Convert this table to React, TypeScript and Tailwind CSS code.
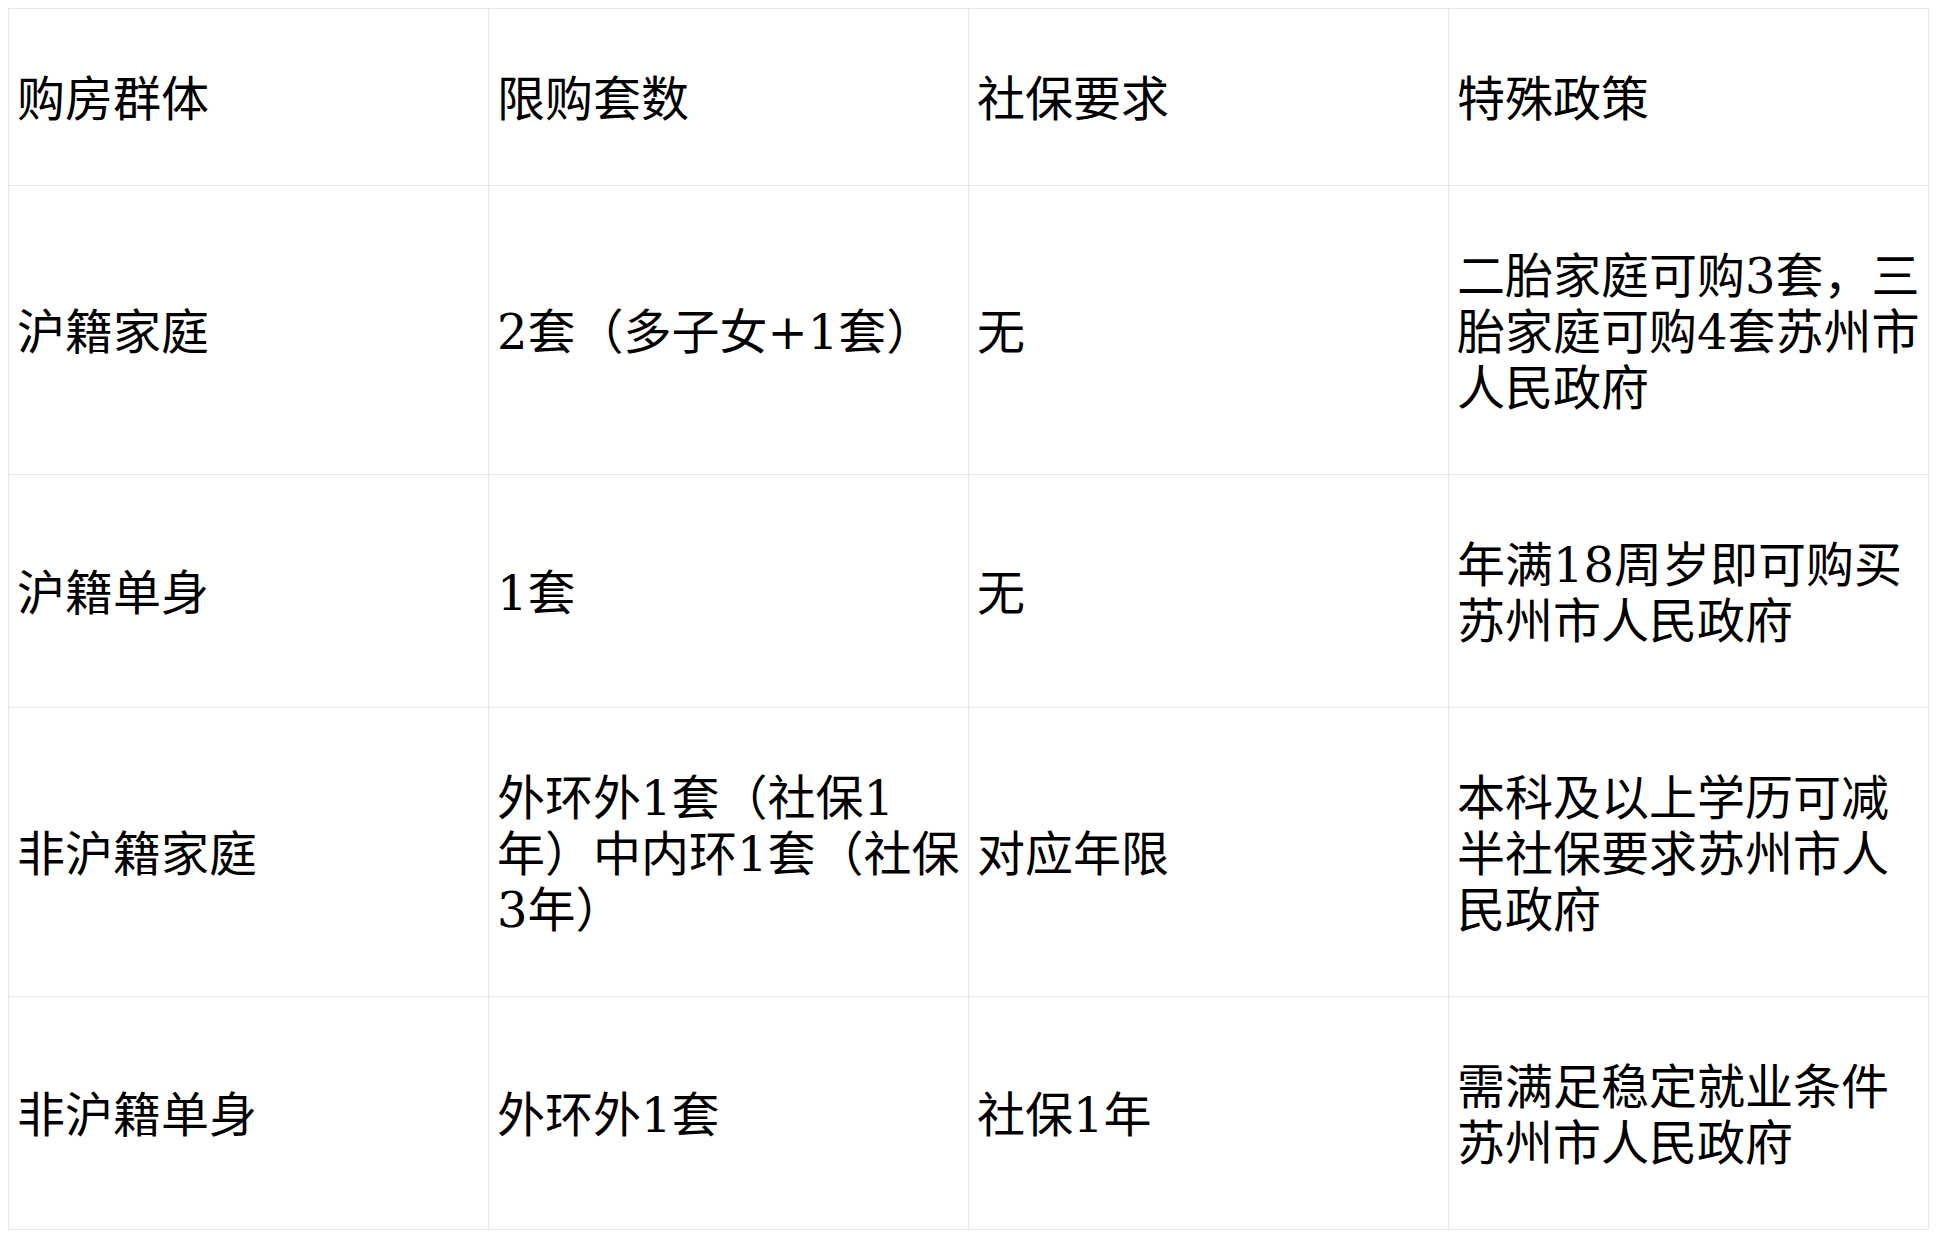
import React from "react";

const HEADERS = ["购房群体", "限购套数", "社保要求", "特殊政策"];

const ROWS: string[][] = [
  ["沪籍家庭", "2套（多子女+1套）", "无", "二胎家庭可购3套，三胎家庭可购4套苏州市人民政府"],
  ["沪籍单身", "1套", "无", "年满18周岁即可购买苏州市人民政府"],
  ["非沪籍家庭", "外环外1套（社保1年）中内环1套（社保3年）", "对应年限", "本科及以上学历可减半社保要求苏州市人民政府"],
  ["非沪籍单身", "外环外1套", "社保1年", "需满足稳定就业条件苏州市人民政府"],
];

const cell = "border border-gray-200 px-2 pt-[62px] pb-[58px] align-middle text-left font-normal";

export default function App() {
  return (
    <div className="bg-white min-h-screen p-2">
      <table
        className="w-[1921px] table-fixed border-collapse text-[48px] leading-[56px] text-black"
        style={{ fontFamily: '"DejaVu Serif", "Noto Sans CJK SC", serif' }}
      >
        <thead>
          <tr>
            {HEADERS.map((h) => (
              <th key={h} className={cell}>
                {h}
              </th>
            ))}
          </tr>
        </thead>
        <tbody>
          {ROWS.map((row) => (
            <tr key={row[0]}>
              {row.map((v, i) => (
                <td key={i} className={cell}>
                  {v}
                </td>
              ))}
            </tr>
          ))}
        </tbody>
      </table>
    </div>
  );
}
